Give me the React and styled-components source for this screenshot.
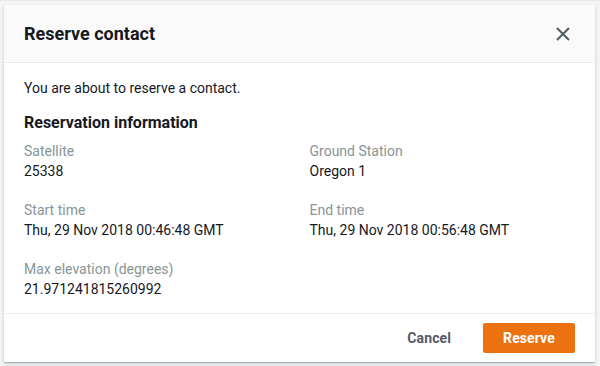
import React from 'react';
import styled, { createGlobalStyle } from 'styled-components';

const GlobalStyle = createGlobalStyle`
  html, body {
    margin: 0;
    padding: 0;
    background: #f4f5f5;
    font-family: Roboto, "Liberation Sans", Arial, sans-serif;
    color: #16191f;
  }
`;

const Page = styled.div`
  width: 600px;
  height: 366px;
  box-sizing: border-box;
  padding: 4px 5px 0 4px;
  border-top: 1px solid #e6e8e8;
  overflow: hidden;
`;

const Modal = styled.div`
  background: #fff;
  border-radius: 1px;
  box-shadow: 0 1px 1px rgba(0, 22, 40, 0.25), 0 2px 4px rgba(0, 22, 40, 0.15);
`;

const Header = styled.div`
  display: flex;
  align-items: center;
  justify-content: space-between;
  height: 57px;
  padding: 0 20px;
  background: #fafafa;
  border-bottom: 1px solid #eaeded;
`;

const Title = styled.h2`
  margin: 0;
  font-size: 18px;
  font-weight: 700;
  line-height: 22px;
  color: #16191f;
`;

const CloseButton = styled.button`
  display: flex;
  align-items: center;
  justify-content: center;
  width: 20px;
  height: 20px;
  padding: 0;
  margin-right: 2px;
  border: 0;
  background: none;
  color: #545b64;
`;

const Body = styled.div`
  padding: 15px 20px 14px;
  font-size: 14px;
  line-height: 20px;
`;

const Intro = styled.p`
  margin: 0 0 15px;
`;

const Heading = styled.h3`
  margin: 0 0 8px;
  font-size: 16px;
  font-weight: 700;
  line-height: 20px;
`;

const Fields = styled.div`
  display: grid;
  grid-template-columns: 1fr 1fr;
  column-gap: 20px;
  row-gap: 19px;
`;

const Field = styled.div`
  display: flex;
  flex-direction: column;
`;

const Label = styled.span`
  color: #879596;
`;

const Value = styled.span`
  color: #16191f;
`;

const Footer = styled.div`
  display: flex;
  align-items: center;
  justify-content: flex-end;
  gap: 31px;
  padding: 9px 20px 9px;
  border-top: 1px solid #eaeded;
`;

const Button = styled.button`
  height: 30px;
  padding: 0 ${(p) => (p.$primary ? '19px' : '0')};
  min-width: ${(p) => (p.$primary ? '92px' : '0')};
  border: 1px solid ${(p) => (p.$primary ? '#ec7211' : 'transparent')};
  border-radius: 2px;
  background: ${(p) => (p.$primary ? '#ec7211' : 'transparent')};
  color: ${(p) => (p.$primary ? '#fff' : '#545b64')};
  font-family: inherit;
  font-size: 14px;
  font-weight: 700;
  letter-spacing: 0.1px;
`;

const fields = [
  ['Satellite', '25338'],
  ['Ground Station', 'Oregon 1'],
  ['Start time', 'Thu, 29 Nov 2018 00:46:48 GMT'],
  ['End time', 'Thu, 29 Nov 2018 00:56:48 GMT'],
  ['Max elevation (degrees)', '21.971241815260992'],
];

export default function App() {
  return (
    <Page>
      <GlobalStyle />
      <Modal>
        <Header>
          <Title>Reserve contact</Title>
          <CloseButton aria-label="Close">
            <svg width="14" height="14" viewBox="0 0 14 14">
              <path d="M1 1L13 13M13 1L1 13" stroke="currentColor" strokeWidth="2" fill="none" />
            </svg>
          </CloseButton>
        </Header>
        <Body>
          <Intro>You are about to reserve a contact.</Intro>
          <Heading>Reservation information</Heading>
          <Fields>
            {fields.map(([label, value]) => (
              <Field key={label}>
                <Label>{label}</Label>
                <Value>{value}</Value>
              </Field>
            ))}
          </Fields>
        </Body>
        <Footer>
          <Button>Cancel</Button>
          <Button $primary>Reserve</Button>
        </Footer>
      </Modal>
    </Page>
  );
}
